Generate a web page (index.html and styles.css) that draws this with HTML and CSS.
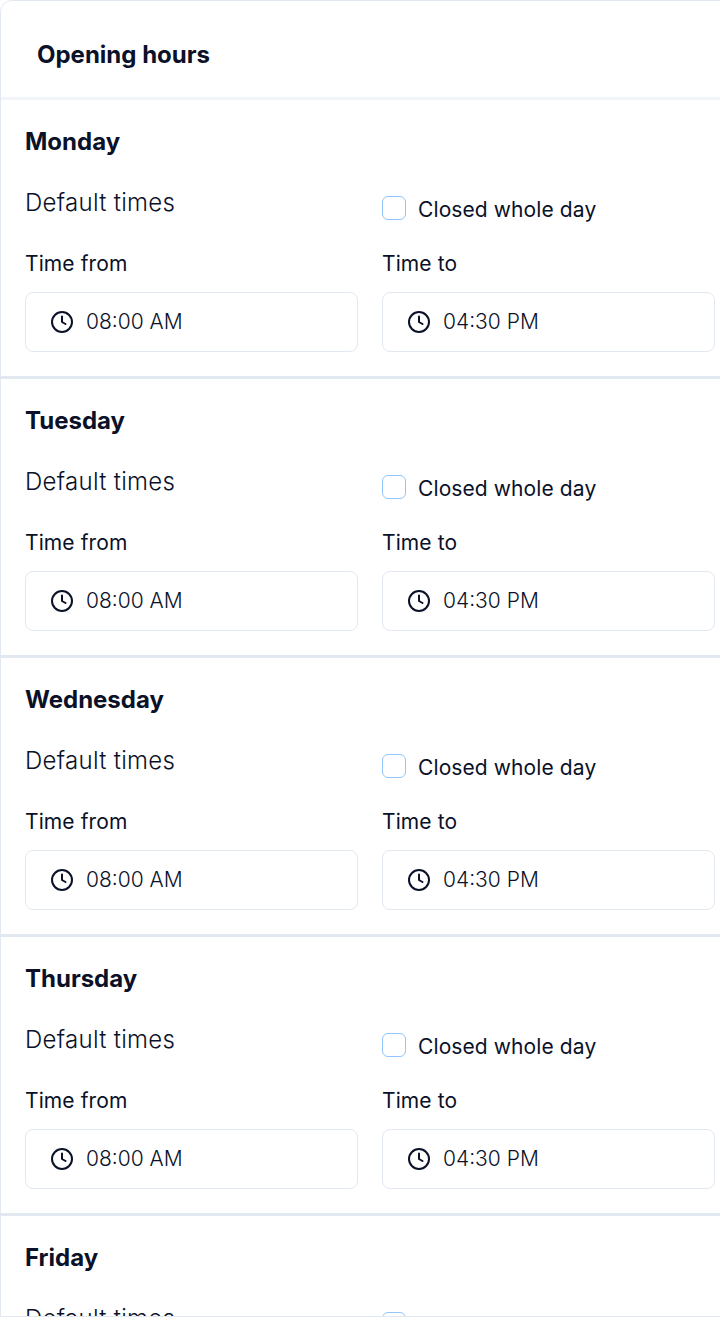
FILE: index.html
```html
<!DOCTYPE html>
<html>
<head>
    <meta charset="utf-8">
    <title>Opening hours</title>
    <link rel="stylesheet" href="styles.css">
</head>
<body>

<div class="card">
    <div class="card-head">Opening hours</div>

    <div class="day">
        <h3 class="day-name">Monday</h3>
        <div class="day-grid">
            <div class="default-label">Default times</div>
            <label class="closed"><span class="check"></span>Closed whole day</label>
            <div class="field">
                <div class="field-label">Time from</div>
                <div class="time-input">
                    <svg class="clock" viewBox="0 0 24 24"><circle cx="12" cy="12" r="10"></circle><path d="M12 6.5V12l3.5 2"></path></svg>
                    <span>08:00 AM</span>
                </div>
            </div>
            <div class="field">
                <div class="field-label">Time to</div>
                <div class="time-input">
                    <svg class="clock" viewBox="0 0 24 24"><circle cx="12" cy="12" r="10"></circle><path d="M12 6.5V12l3.5 2"></path></svg>
                    <span>04:30 PM</span>
                </div>
            </div>
        </div>
    </div>

    <div class="day">
        <h3 class="day-name">Tuesday</h3>
        <div class="day-grid">
            <div class="default-label">Default times</div>
            <label class="closed"><span class="check"></span>Closed whole day</label>
            <div class="field">
                <div class="field-label">Time from</div>
                <div class="time-input">
                    <svg class="clock" viewBox="0 0 24 24"><circle cx="12" cy="12" r="10"></circle><path d="M12 6.5V12l3.5 2"></path></svg>
                    <span>08:00 AM</span>
                </div>
            </div>
            <div class="field">
                <div class="field-label">Time to</div>
                <div class="time-input">
                    <svg class="clock" viewBox="0 0 24 24"><circle cx="12" cy="12" r="10"></circle><path d="M12 6.5V12l3.5 2"></path></svg>
                    <span>04:30 PM</span>
                </div>
            </div>
        </div>
    </div>

    <div class="day">
        <h3 class="day-name">Wednesday</h3>
        <div class="day-grid">
            <div class="default-label">Default times</div>
            <label class="closed"><span class="check"></span>Closed whole day</label>
            <div class="field">
                <div class="field-label">Time from</div>
                <div class="time-input">
                    <svg class="clock" viewBox="0 0 24 24"><circle cx="12" cy="12" r="10"></circle><path d="M12 6.5V12l3.5 2"></path></svg>
                    <span>08:00 AM</span>
                </div>
            </div>
            <div class="field">
                <div class="field-label">Time to</div>
                <div class="time-input">
                    <svg class="clock" viewBox="0 0 24 24"><circle cx="12" cy="12" r="10"></circle><path d="M12 6.5V12l3.5 2"></path></svg>
                    <span>04:30 PM</span>
                </div>
            </div>
        </div>
    </div>

    <div class="day">
        <h3 class="day-name">Thursday</h3>
        <div class="day-grid">
            <div class="default-label">Default times</div>
            <label class="closed"><span class="check"></span>Closed whole day</label>
            <div class="field">
                <div class="field-label">Time from</div>
                <div class="time-input">
                    <svg class="clock" viewBox="0 0 24 24"><circle cx="12" cy="12" r="10"></circle><path d="M12 6.5V12l3.5 2"></path></svg>
                    <span>08:00 AM</span>
                </div>
            </div>
            <div class="field">
                <div class="field-label">Time to</div>
                <div class="time-input">
                    <svg class="clock" viewBox="0 0 24 24"><circle cx="12" cy="12" r="10"></circle><path d="M12 6.5V12l3.5 2"></path></svg>
                    <span>04:30 PM</span>
                </div>
            </div>
        </div>
    </div>

    <div class="day">
        <h3 class="day-name">Friday</h3>
        <div class="day-grid">
            <div class="default-label">Default times</div>
            <label class="closed"><span class="check"></span>Closed whole day</label>
        </div>
    </div>
</div>

</body>
</html>
```

FILE: styles.css
```css
*{
    padding: 0;
    margin: 0;
    box-sizing: border-box;
}

html{
    height: 1317px;
    overflow: hidden;
}

/* the line under the scrolled panel */
body{
    height: 1317px;
    overflow: hidden;
    border-bottom: 1px solid #e2e8f0;
    background-color: #fff;
    color: #0a1128;
    font-family: Inter, "Liberation Sans", sans-serif;
}

.card{
    width: 740px;
    border: 1px solid #e2e8f0;
    border-radius: 12px;
    background-color: #fff;
}

.card-head{
    height: 99px;
    padding: 12px 36px 0;
    display: flex;
    align-items: center;
    font-size: 24px;
    font-weight: 700;
    border-bottom: 3px solid #f1f5f9;
    line-height: 1;
}

.day{
    padding: 24px 24px 24px;
    border-bottom: 3px solid #e2e8f0;
}

.day-name{
    font-size: 24px;
    line-height: 36px;
    font-weight: 700;
}

.day-grid{
    margin-top: 27px;
    display: grid;
    grid-template-columns: 333px 333px;
    column-gap: 24px;
}

.default-label{
    font-size: 24px;
    line-height: 32px;
    font-weight: 300;
    letter-spacing: 0.3px;
}

.closed{
    display: flex;
    align-items: center;
    gap: 12px;
    font-size: 21px;
    line-height: 32px;
    letter-spacing: 0.1px;
    margin-top: 7px;
}

.check{
    width: 24px;
    height: 24px;
    margin-top: -4px;
    border: 1px solid #93c5fd;
    border-radius: 6px;
}

.field{
    margin-top: 24px;
}

.field-label{
    font-size: 21px;
    line-height: 28px;
    letter-spacing: 0.1px;
}

.time-input{
    margin-top: 14px;
    height: 60px;
    padding: 0 24px 2px;
    display: flex;
    align-items: center;
    gap: 12px;
    border: 1px solid #e2e8f0;
    border-radius: 8px;
    font-size: 21px;
    font-weight: 300;
}

.clock{
    width: 24px;
    height: 24px;
    margin-top: 2px;
    fill: none;
    stroke: #0a1128;
    stroke-width: 2;
    stroke-linecap: round;
    stroke-linejoin: round;
}
```
